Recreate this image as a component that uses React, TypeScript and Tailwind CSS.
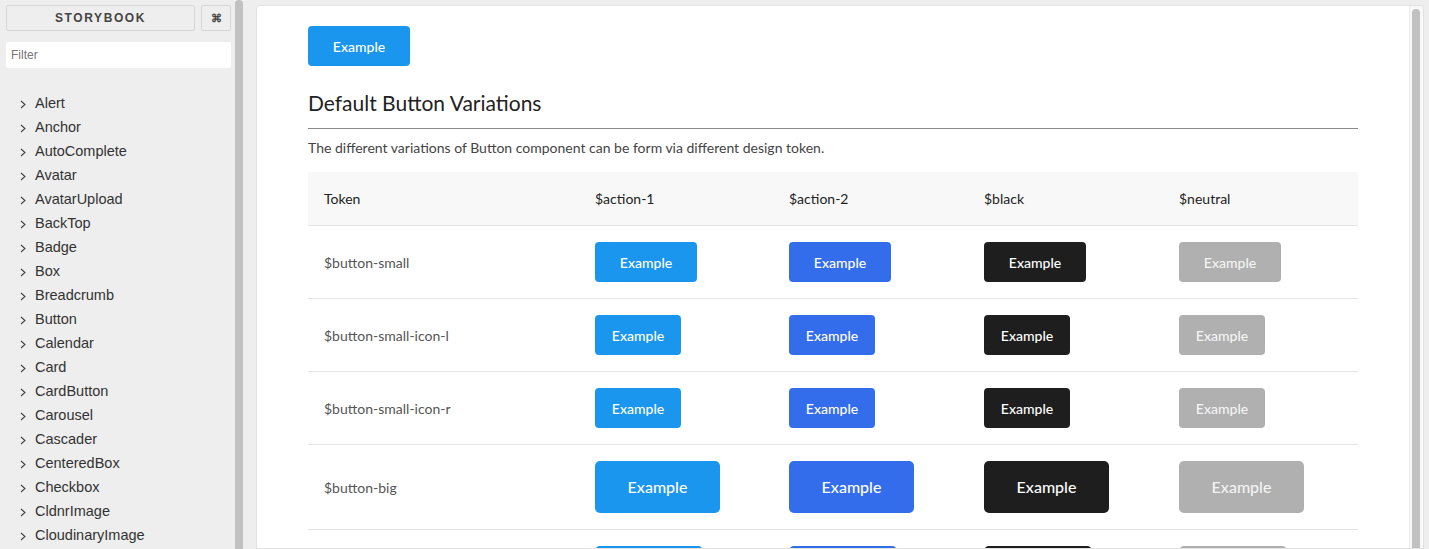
const stories = [
  'Alert',
  'Anchor',
  'AutoComplete',
  'Avatar',
  'AvatarUpload',
  'BackTop',
  'Badge',
  'Box',
  'Breadcrumb',
  'Button',
  'Calendar',
  'Card',
  'CardButton',
  'Carousel',
  'Cascader',
  'CenteredBox',
  'Checkbox',
  'CldnrImage',
  'CloudinaryImage',
]

const colors = [
  { token: '$action-1', bg: 'bg-[#1b96ee]', text: 'text-white' },
  { token: '$action-2', bg: 'bg-[#336dec]', text: 'text-white' },
  { token: '$black', bg: 'bg-[#1e1e1e]', text: 'text-white' },
  { token: '$neutral', bg: 'bg-[#b0b0b0]', text: 'text-[#f4f4f4]' },
]

const sizes = [
  { token: '$button-small', btn: 'h-[40px] w-[102px] text-[14px]', row: 'h-[73px]' },
  { token: '$button-small-icon-l', btn: 'h-[40px] w-[86px] text-[14px]', row: 'h-[73px]' },
  { token: '$button-small-icon-r', btn: 'h-[40px] w-[86px] text-[14px]', row: 'h-[73px]' },
  { token: '$button-big', btn: 'h-[52px] w-[125px] text-[16px] rounded-[5px]', row: 'h-[85px]' },
  { token: '$button-big-icon-l', btn: 'h-[52px] w-[108px] text-[16px] rounded-[5px]', row: 'h-[85px]' },
]

function Chevron() {
  return (
    <svg width="6" height="9" viewBox="0 0 6 9" className="shrink-0">
      <polyline points="1,1 5,4.5 1,8" fill="none" stroke="#444" strokeWidth="1.1" />
    </svg>
  )
}

function Sidebar() {
  return (
    <div className="flex w-[245px] shrink-0 h-full">
      <div className="w-[232px] pl-[6px] pt-[5px] font-['Liberation_Sans',Arial,sans-serif]">
        {/* ── Header ───────────────────────────── */}
        <div className="flex gap-[6px]">
          <div className="flex h-[26px] w-[189px] items-center justify-center rounded-[2px] border border-[#d6d6d6] text-[12px] font-bold tracking-[1.6px] text-[#444]">
            STORYBOOK
          </div>
          <div className="flex h-[26px] w-[30px] items-center justify-center rounded-[2px] border border-[#d6d6d6] text-[11px] font-bold text-[#444]">
            ⌘
          </div>
        </div>

        <div className="mt-[11px] flex h-[26px] w-[225px] items-center rounded-[2px] bg-white pl-[5px] text-[12px] text-[#777]">
          Filter
        </div>

        {/* ── Story tree ───────────────────────── */}
        <div className="mt-[24px]">
          {stories.map((s) => (
            <div key={s} className="flex h-[24px] items-center gap-[9px] pl-[14px] text-[14.5px] text-[#333]">
              <Chevron />
              <span>{s}</span>
            </div>
          ))}
        </div>
      </div>
      <div className="w-[13px] h-full pl-[3px]">
        <div className="h-full w-[8px] rounded-t-full bg-[#c1c1c1]" />
      </div>
    </div>
  )
}

function Button({ className }: { className: string }) {
  return (
    <div className={`flex items-center justify-center rounded-[4px] font-medium ${className}`}>
      Example
    </div>
  )
}

function Preview() {
  return (
    <div className="ml-[11px] mr-[5px] mt-[5px] flex flex-1 overflow-hidden rounded-t-[4px] border border-[#e2e2e2] bg-white">
      <div className="flex-1 overflow-hidden px-[51px] pt-[20px] font-['Lato',sans-serif]">
        <Button className="h-[40px] w-[102px] bg-[#1b96ee] text-[14px] text-white" />

        <h2 className="mt-[23px] text-[21px] leading-[28px] text-[#222]">
          Default Button Variations
        </h2>
        <div className="mt-[11px] h-px bg-[#8a8a8a]" />
        <p className="mt-[9px] text-[14px] leading-[20px] text-[#444]">
          The different variations of Button component can be form via different design token.
        </p>

        {/* ── Table ───────────────────────────── */}
        <div className="mt-[14px]">
          <div className="grid h-[54px] grid-cols-[271px_194px_195px_195px_195px] items-center border-b border-[#e4e4e4] bg-[#f8f8f8] text-[14px] text-[#222]">
            <div className="pl-4">Token</div>
            {colors.map((c) => (
              <div key={c.token} className="pl-4">{c.token}</div>
            ))}
          </div>
          {sizes.map((s) => (
            <div
              key={s.token}
              className={`grid grid-cols-[271px_194px_195px_195px_195px] items-center border-b border-[#e4e4e4] ${s.row}`}
            >
              <div className="pl-4 text-[14px] text-[#555]">{s.token}</div>
              {colors.map((c) => (
                <div key={c.token} className="pl-4">
                  <Button className={`${s.btn} ${c.bg} ${c.text}`} />
                </div>
              ))}
            </div>
          ))}
        </div>
      </div>
      <div className="w-[14px] shrink-0 border-l border-[#ececec] bg-[#f8f8f8] pl-[2px] pt-[3px]">
        <div className="h-full w-[8px] rounded-t-full bg-[#c1c1c1]" />
      </div>
    </div>
  )
}

export default function App() {
  return (
    <div className="flex h-[549px] w-full overflow-hidden bg-[#eeeeee]">
      <Sidebar />
      <Preview />
    </div>
  )
}
